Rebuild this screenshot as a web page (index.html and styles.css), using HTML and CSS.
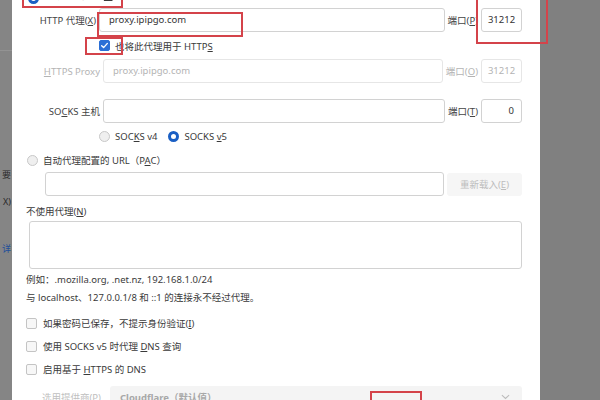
FILE: index.html
```html
<!DOCTYPE html>
<html>
<head>
    <meta charset="utf-8">
    <title>连接设置</title>
    <link rel="stylesheet" href="styles.css">
</head>
<body>
    <div class="screen">
        <div class="backdrop backdrop-left">
            <div class="backdrop-line"></div>
            <div class="stub stub-1">要</div>
            <div class="stub stub-2">X)</div>
            <div class="stub stub-3 link">详</div>
        </div>

        <div class="dialog">
            <div class="row row-top">
                <div class="row-top-inner">
                    <span class="radio checked"></span>
                    <span class="radio-label">手动代理配置(<u>M</u>)</span>
                </div>
            </div>

            <div class="row proxy-row">
                <label class="row-label tight">HTTP 代理(<u>X</u>)</label>
                <div class="field">proxy.ipipgo.com</div>
                <label class="port-label">端口(<u>P</u>)</label>
                <div class="field port">31212</div>
            </div>

            <div class="row check-row">
                <span class="checkbox checked">
                    <svg viewBox="0 0 12 12" width="9" height="9"><path d="M2.2 6.3 L4.8 8.8 L9.8 3.2" fill="none" stroke="#fff" stroke-width="1.8" stroke-linecap="round" stroke-linejoin="round"/></svg>
                </span>
                <span class="check-label">也将此代理用于 HTTP<u>S</u></span>
            </div>

            <div class="row proxy-row disabled">
                <label class="row-label"><u>H</u>TTPS Proxy</label>
                <div class="field">proxy.ipipgo.com</div>
                <label class="port-label">端口(<u>O</u>)</label>
                <div class="field port">31212</div>
            </div>

            <div class="row proxy-row socks-row">
                <label class="row-label">SO<u>C</u>KS 主机</label>
                <div class="field"></div>
                <label class="port-label">端口(<u>T</u>)</label>
                <div class="field port right">0</div>
            </div>

            <div class="row radio-row">
                <span class="radio"></span>
                <span class="radio-label">SOC<u>K</u>S v4</span>
                <span class="radio checked"></span>
                <span class="radio-label">SOCKS <u>v</u>5</span>
            </div>

            <div class="row pac-row">
                <span class="radio"></span>
                <span class="radio-label">自动代理配置的 URL（P<u>A</u>C）</span>
            </div>

            <div class="row url-row">
                <div class="field"></div>
                <div class="button disabled-btn">重新载入(<u>E</u>)</div>
            </div>

            <div class="section-label">不使用代理(<u>N</u>)</div>
            <div class="textarea"></div>
            <div class="hint first">例如：.mozilla.org, .net.nz, 192.168.1.0/24</div>
            <div class="hint">与 localhost、127.0.0.1/8 和 ::1 的连接永不经过代理。</div>

            <div class="row option-row first">
                <span class="checkbox"></span>
                <span class="check-label">如果密码已保存，不提示身份验证(<u>I</u>)</span>
            </div>
            <div class="row option-row">
                <span class="checkbox"></span>
                <span class="check-label">使用 SOCKS v5 时代理 <u>D</u>NS 查询</span>
            </div>
            <div class="row option-row">
                <span class="checkbox"></span>
                <span class="check-label">启用基于 <u>H</u>TTPS 的 DNS</span>
            </div>

            <div class="row provider-row">
                <label class="provider-label">选用提供商(P)</label>
                <div class="select">
                    <span>Cloudflare（默认值）</span>
                    <svg viewBox="0 0 10 6" width="9" height="6"><path d="M1 1 L5 4.6 L9 1" fill="none" stroke="#bbb" stroke-width="1.2"/></svg>
                </div>
            </div>
        </div>

        <div class="backdrop backdrop-right"></div>

        <div class="mark mark-1"></div>
        <div class="mark mark-2"></div>
        <div class="mark mark-3"></div>
        <div class="mark mark-4"></div>
        <div class="mark mark-5"></div>
    </div>
</body>
</html>
```

FILE: styles.css
```css
* {
    margin: 0;
    padding: 0;
    box-sizing: border-box;
}

body {
    font-family: "Noto Sans", "Noto Sans CJK SC", sans-serif;
    font-size: 9.5px;
    color: #3a3a3a;
    background: #808080;
}

u {
    text-decoration-thickness: 1px;
    text-underline-offset: 1px;
}

.screen {
    position: relative;
    display: flex;
    width: 600px;
    height: 400px;
    overflow: hidden;
}

.backdrop {
    background: #808080;
}

.backdrop-left {
    position: relative;
    width: 12px;
    flex-shrink: 0;
    background: #858585;
}

.backdrop-line {
    position: absolute;
    top: 50px;
    left: 0;
    width: 12px;
    height: 1px;
    background: #939393;
}

.stub {
    position: absolute;
    right: 1px;
    color: #2a2a2a;
    font-size: 9px;
    line-height: 12px;
    white-space: nowrap;
}

.stub-1 { top: 169px; }
.stub-2 { top: 196px; }
.stub-3 { top: 243px; }

.stub.link {
    color: #1f4f9a;
}

.backdrop-right {
    flex: 1;
}

.dialog {
    width: 528px;
    flex-shrink: 0;
    background: #fff;
    padding: 0 18px 0 14px;
}

.row {
    display: flex;
    align-items: center;
}

/* partially scrolled-off first row */
.row-top {
    height: 8px;
    overflow: hidden;
    align-items: flex-start;
}

.row-top-inner {
    display: flex;
    align-items: center;
    margin-top: -12px;
    padding-left: 2px;
    height: 14px;
}

.proxy-row {
    height: 24px;
    gap: 3px;
}

.row-label {
    width: 74px;
    flex-shrink: 0;
    text-align: right;
    white-space: nowrap;
    color: #444;
}

.row-label.tight {
    width: 70px;
}

.field {
    flex: 1;
    height: 24px;
    border: 1px solid #d2d2d2;
    border-radius: 3px;
    padding: 0 9px;
    line-height: 22px;
    color: #333;
    background: #fff;
}

.field.port {
    flex: none;
    width: 41px;
    padding: 0;
    text-align: center;
}

.field.port.right {
    text-align: right;
    padding-right: 7px;
}

.port-label {
    flex-shrink: 0;
    white-space: nowrap;
    color: #444;
}

.disabled .row-label,
.disabled .port-label,
.disabled .field {
    color: #b4b4b4;
}

.disabled .field {
    border-color: #e6e6e6;
}

.check-row {
    height: 27px;
    padding-left: 73px;
    gap: 5px;
}

.checkbox {
    width: 11px;
    height: 11px;
    flex-shrink: 0;
    border: 1px solid #c4c4c4;
    border-radius: 2px;
    background: #f7f7f7;
    display: flex;
    align-items: center;
    justify-content: center;
}

.checkbox.checked {
    background: #2b6fd6;
    border-color: #2b6fd6;
}

.check-label {
    white-space: nowrap;
    color: #3a3a3a;
}

.socks-row {
    margin-top: 16px;
}

.radio {
    width: 11px;
    height: 11px;
    flex-shrink: 0;
    border-radius: 50%;
    border: 1px solid #c8c8c8;
    background: #efefef;
}

.radio.checked {
    border: 3px solid #1a5fc4;
    background: #fff;
}

.radio-label {
    white-space: nowrap;
    margin-left: 5px;
}

.row-top .radio {
    margin-top: 6px;
}

.radio-row {
    height: 26px;
    padding-left: 73px;
}

.radio-row .radio.checked {
    margin-left: 11px;
}

.pac-row {
    height: 22px;
    padding-left: 1px;
}

.url-row {
    margin-top: 1px;
    height: 24px;
    padding-left: 19px;
    gap: 3px;
}

.button {
    width: 75px;
    height: 23px;
    border-radius: 3px;
    text-align: center;
    line-height: 23px;
}

.disabled-btn {
    background: #f6f6f6;
    color: #bdbdbd;
}

.section-label {
    margin-top: 9px;
    line-height: 14px;
    color: #3a3a3a;
}

.textarea {
    margin-top: 2px;
    margin-left: 3px;
    height: 48px;
    border: 1px solid #d2d2d2;
    border-radius: 3px;
}

.hint {
    margin-top: 4px;
    line-height: 14px;
    color: #3a3a3a;
}

.option-row {
    height: 22px;
    gap: 6px;
    margin-top: 1px;
}

.option-row.first {
    margin-top: 7px;
}

.provider-row {
    margin-top: 6px;
    height: 22px;
    padding-left: 16px;
}

.provider-label {
    width: 68px;
    flex-shrink: 0;
    color: #c0c0c0;
    white-space: nowrap;
}

.select {
    flex: 1;
    height: 22px;
    background: #f4f4f4;
    border-radius: 3px;
    display: flex;
    align-items: center;
    justify-content: space-between;
    padding: 0 12px 0 10px;
    color: #a8a8a8;
    font-weight: bold;
}

/* red annotation boxes */
.mark {
    position: absolute;
    border: 2px solid #d4434a;
}

.mark-1 { left: 22px;  top: -4px;  width: 101px; height: 12px; }
.mark-2 { left: 97px;  top: 12px;  width: 146px; height: 25px; }
.mark-3 { left: 476px; top: -4px;  width: 72px;  height: 48px; }
.mark-4 { left: 85px;  top: 37px;  width: 38px;  height: 18px; }
.mark-5 { left: 370px; top: 391px; width: 52px;  height: 14px; }
```
